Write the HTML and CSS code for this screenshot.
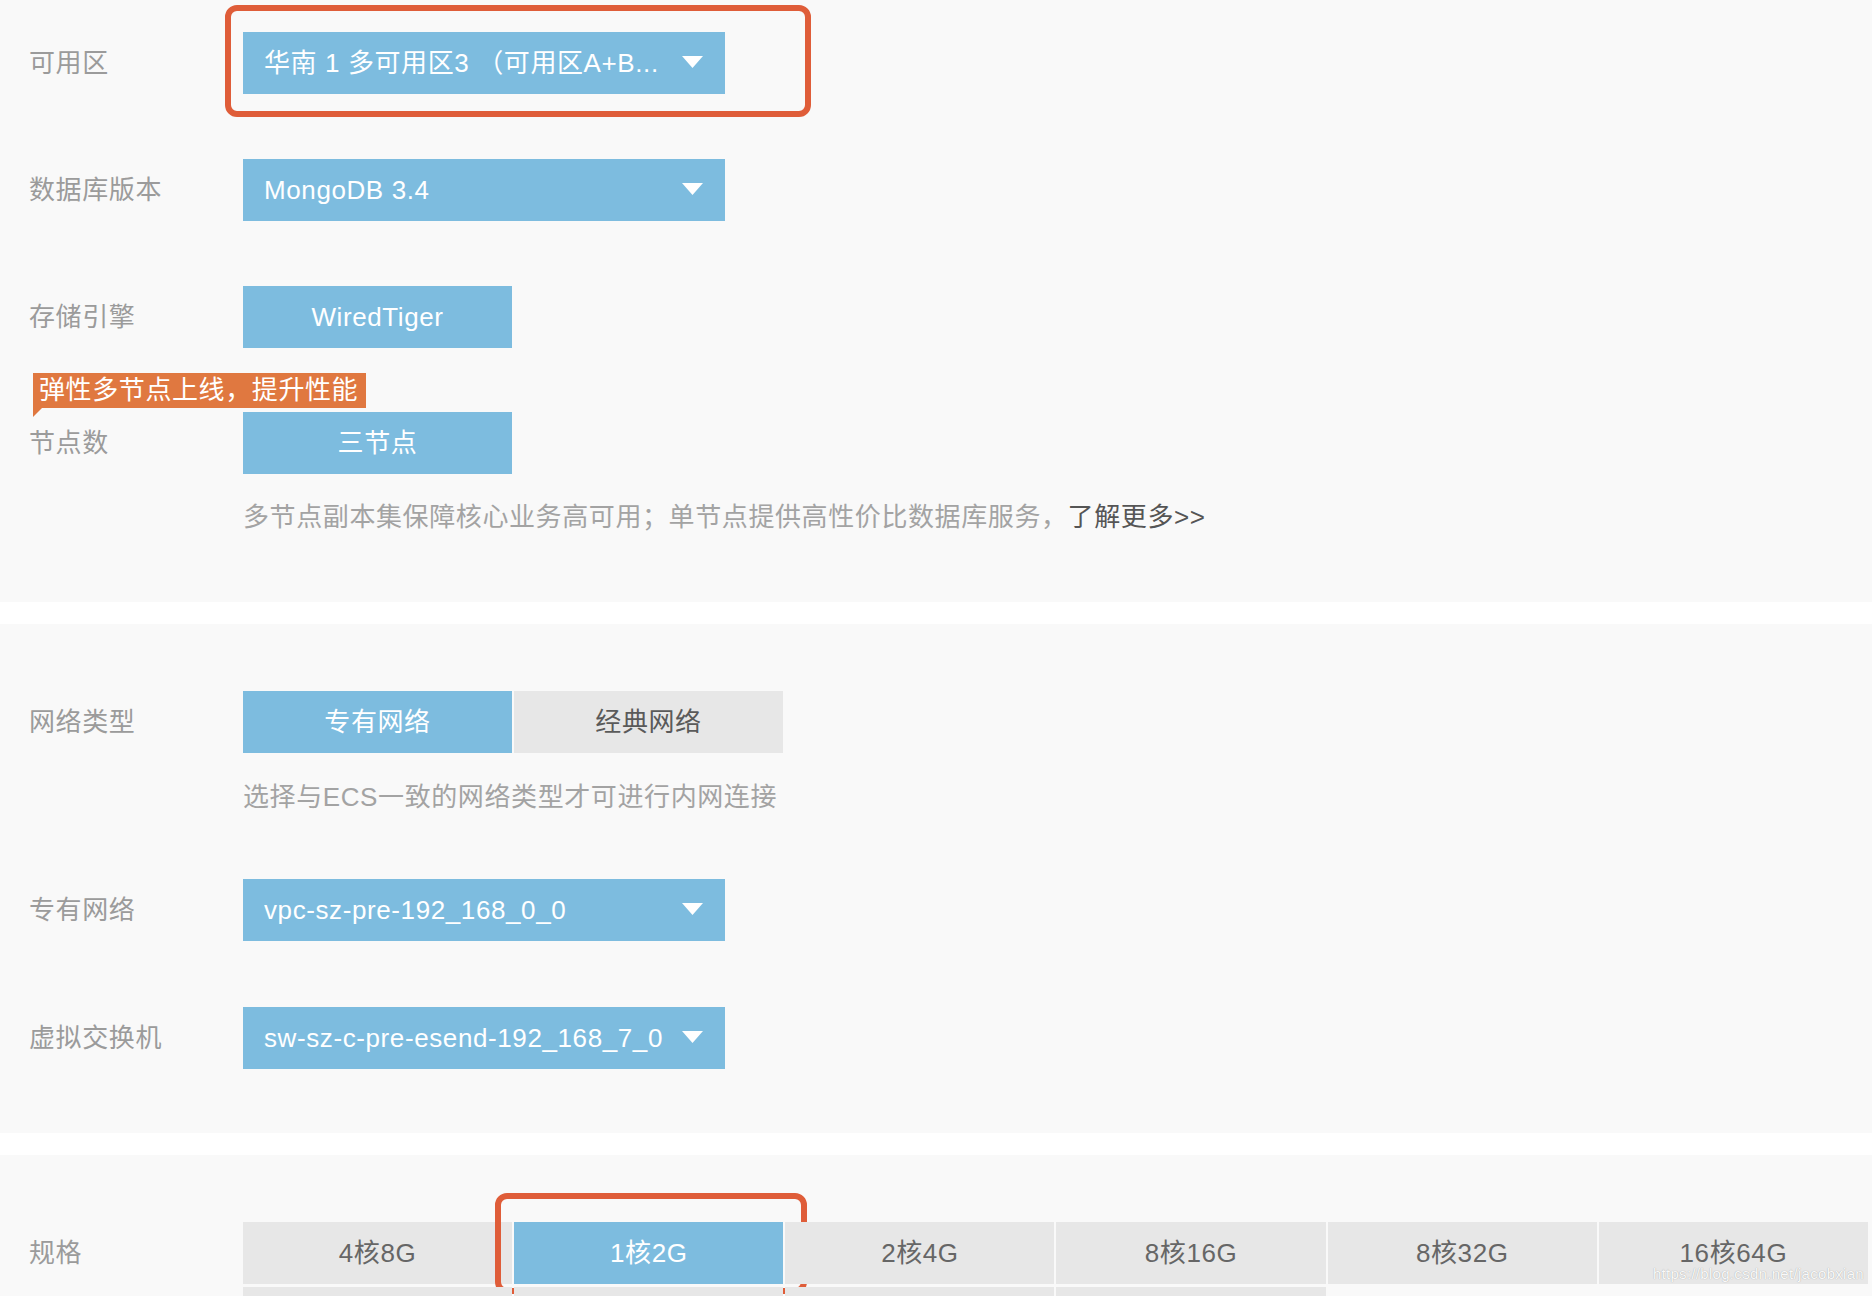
FILE: index.html
```html
<!DOCTYPE html>
<html lang="zh-CN">
<head>
<meta charset="utf-8">
<title>云数据库 MongoDB 配置</title>
<link rel="stylesheet" href="styles.css">
</head>
<body>
<div class="page">
  <section class="panel panel-basic">
    <div class="row">
      <div class="label">可用区</div>
      <div class="select select-zone">
        <span class="select-text">华南 1 多可用区3 （可用区A+B...</span>
        <svg class="caret" width="21" height="12" viewBox="0 0 21 12"><polygon points="0,0 21,0 10.5,12" fill="#fff"/></svg>
        <span class="annot annot-zone"></span>
      </div>
    </div>
    <div class="row">
      <div class="label">数据库版本</div>
      <div class="select">
        <span class="select-text">MongoDB 3.4</span>
        <svg class="caret" width="21" height="12" viewBox="0 0 21 12"><polygon points="0,0 21,0 10.5,12" fill="#fff"/></svg>
      </div>
    </div>
    <div class="row">
      <div class="label">存储引擎</div>
      <div class="btn-group">
        <div class="btn btn-active">WiredTiger</div>
      </div>
    </div>
    <div class="row row-nodes">
      <div class="label">节点数</div>
      <div class="btn-group">
        <div class="btn btn-active">三节点</div>
      </div>
      <div class="tag">弹性多节点上线，提升性能</div>
    </div>
    <p class="hint hint-nodes">多节点副本集保障核心业务高可用；单节点提供高性价比数据库服务，<a class="more">了解更多&gt;&gt;</a></p>
  </section>

  <section class="panel panel-network">
    <div class="row">
      <div class="label">网络类型</div>
      <div class="btn-group">
        <div class="btn btn-active">专有网络</div>
        <div class="btn">经典网络</div>
      </div>
    </div>
    <p class="hint hint-net">选择与ECS一致的网络类型才可进行内网连接</p>
    <div class="row row-vpc">
      <div class="label">专有网络</div>
      <div class="select">
        <span class="select-text">vpc-sz-pre-192_168_0_0</span>
        <svg class="caret" width="21" height="12" viewBox="0 0 21 12"><polygon points="0,0 21,0 10.5,12" fill="#fff"/></svg>
      </div>
    </div>
    <div class="row row-vsw">
      <div class="label">虚拟交换机</div>
      <div class="select">
        <span class="select-text">sw-sz-c-pre-esend-192_168_7_0</span>
        <svg class="caret" width="21" height="12" viewBox="0 0 21 12"><polygon points="0,0 21,0 10.5,12" fill="#fff"/></svg>
      </div>
    </div>
  </section>

  <section class="panel panel-spec">
    <div class="row row-spec">
      <div class="label">规格</div>
      <div class="spec-grid">
        <div class="cell">4核8G</div>
        <div class="cell cell-active">1核2G<span class="annot annot-spec"></span></div>
        <div class="cell">2核4G</div>
        <div class="cell">8核16G</div>
        <div class="cell">8核32G</div>
        <div class="cell">16核64G</div>
        <div class="cell"></div>
        <div class="cell"></div>
        <div class="cell"></div>
        <div class="cell"></div>
      </div>
    </div>
    <div class="watermark">https://blog.csdn.net/jacobxian</div>
  </section>
</div>
</body>
</html>
```

FILE: styles.css
```css
* { box-sizing: border-box; }

html, body {
  margin: 0;
  padding: 0;
  background: #ffffff;
  font-family: "Liberation Sans", "Noto Sans CJK SC", sans-serif;
  font-size: 26px;
  letter-spacing: 0.6px;
  color: #999999;
}

.page {
  width: 1872px;
  height: 1296px;
  overflow: hidden;
}

.panel {
  background: #f9f9f9;
  position: relative;
}

.panel-basic {
  padding: 32px 0 67px;
  margin-bottom: 22px;
}

.panel-network {
  padding: 67px 0 64px;
  margin-bottom: 22px;
}

.panel-spec {
  padding: 67px 0 40px;
  min-height: 200px;
}

.row {
  display: flex;
  align-items: center;
  position: relative;
  min-height: 62px;
}

.row + .row { margin-top: 65px; }
.row-nodes { margin-top: 64px !important; }
.row-vpc { margin-top: 64px; }
.row-vsw { margin-top: 66px !important; }

.label {
  width: 243px;
  flex: none;
  padding-left: 29px;
  color: #9b9b9b;
  font-size: 26px;
  line-height: 62px;
  white-space: nowrap;
}

.select {
  position: relative;
  width: 482px;
  height: 62px;
  background: #7dbcdf;
  color: #ffffff;
  display: flex;
  align-items: center;
  padding: 0 22px 0 21px;
}

.select-text {
  flex: 1;
  white-space: nowrap;
  overflow: hidden;
  line-height: 62px;
}

.caret {
  flex: none;
  margin-top: -2px;
}

.btn-group {
  display: flex;
  gap: 2px;
}

.btn {
  width: 269px;
  height: 62px;
  line-height: 62px;
  text-align: center;
  background: #e7e7e7;
  color: #5a5a5a;
}

.btn-active {
  background: #7dbcdf;
  color: #ffffff;
}

.tag {
  position: absolute;
  left: 33px;
  top: -39px;
  height: 35px;
  line-height: 35px;
  padding: 0 8px 0 6px;
  background: #e07840;
  color: #ffffff;
  font-size: 26px;
  white-space: nowrap;
}

.tag::after {
  content: "";
  position: absolute;
  left: 0;
  top: 35px;
  border-top: 9px solid #e07840;
  border-right: 9px solid transparent;
}

.hint {
  margin: 0 0 0 243px;
  line-height: 36px;
  color: #a3a3a3;
  font-size: 26px;
  white-space: nowrap;
}

.hint-nodes { margin-top: 25px; }
.hint-net { margin-top: 26px; }

.more {
  color: #555555;
}

.annot {
  position: absolute;
  border: 6px solid #df5d39;
  border-radius: 12px;
  pointer-events: none;
}

.annot-zone {
  left: -18px;
  top: -27px;
  right: -86px;
  bottom: -23px;
}

.row-spec {
  align-items: flex-start;
}

.row-spec .label {
  line-height: 62px;
}

.spec-grid {
  width: 1625px;
  display: grid;
  grid-template-columns: repeat(6, 1fr);
  column-gap: 2px;
  row-gap: 3px;
}

.cell {
  position: relative;
  height: 62px;
  line-height: 62px;
  text-align: center;
  background: #e7e7e7;
  color: #666666;
}

.cell-active {
  background: #7dbcdf;
  color: #ffffff;
}

.annot-spec {
  left: -19px;
  top: -29px;
  right: -24px;
  bottom: -10px;
}

.watermark {
  position: absolute;
  right: 8px;
  top: 110px;
  font-family: "Liberation Sans", sans-serif;
  font-size: 15px;
  line-height: 18px;
  letter-spacing: 0.3px;
  color: rgba(255, 255, 255, 0.95);
  text-shadow: 0 0 1px rgba(0, 0, 0, 0.35);
}
```
